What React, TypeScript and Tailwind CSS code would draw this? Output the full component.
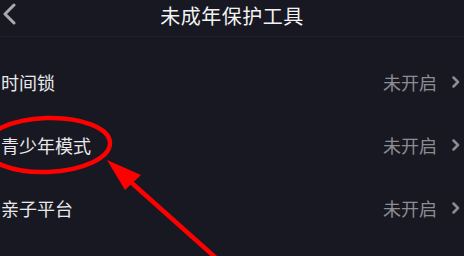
const ROWS = ['时间锁', '青少年模式', '亲子平台']

const FONT = { fontFamily: '"Noto Sans CJK SC", "Noto Sans", sans-serif' }

export default function App() {
  return (
    <div className="relative w-[464px] h-[256px] overflow-hidden bg-[#181822]" style={FONT}>
      {/* Header */}
      <div className="h-[37px] border-b border-[#20202b]">
        <div className="relative h-[31px] flex items-center justify-center">
          <svg
            className="absolute left-[2px] top-[3px]"
            width="14"
            height="22"
            viewBox="0 0 14 22"
            fill="none"
            stroke="#a9a9ae"
            strokeWidth="3"
            strokeLinecap="round"
            strokeLinejoin="round"
          >
            <polyline points="12,2 3,11 12,20" />
          </svg>
          <span className="text-[20px] leading-none text-[#f2f2f2] tracking-[0.5px]">未成年保护工具</span>
        </div>
      </div>

      {/* Rows */}
      <div className="pt-[13px]">
        {ROWS.map((label) => (
          <div key={label} className="h-[63px] flex items-center justify-between pl-[1px] pr-[4px]">
            <span className="text-[18px] leading-none text-[#e8e8ea]">{label}</span>
            <div className="flex items-center gap-[15px]">
              <span className="text-[18px] leading-none text-[#8c8c91]">未开启</span>
              <svg
                width="8"
                height="12"
                viewBox="0 0 8 12"
                fill="none"
                stroke="#8c8c91"
                strokeWidth="2.5"
                strokeLinecap="round"
                strokeLinejoin="round"
              >
                <polyline points="1.5,1.5 6,6 1.5,10.5" />
              </svg>
            </div>
          </div>
        ))}
      </div>

      {/* Annotation */}
      <svg className="absolute inset-0 pointer-events-none" width="464" height="256" viewBox="0 0 464 256">
        <ellipse cx="47" cy="145" rx="63" ry="27" fill="none" stroke="#ff0000" strokeWidth="4.5" transform="rotate(-2 47 145)" />
        <line x1="216" y1="258" x2="124" y2="176" stroke="#ff0000" strokeWidth="4.5" />
        <polygon points="107,160 141,175 125,190" fill="#ff0000" />
      </svg>
    </div>
  )
}
